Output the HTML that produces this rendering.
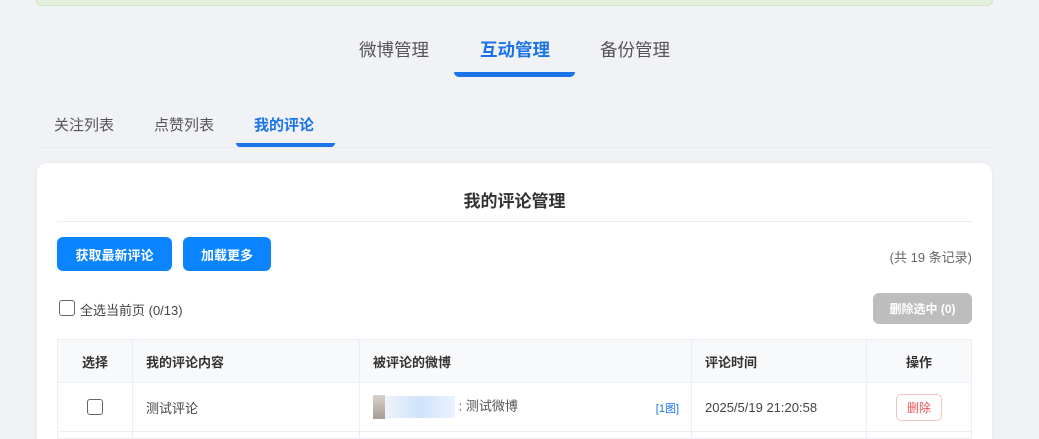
<!DOCTYPE html>
<html><head><meta charset="utf-8"><style>
*{box-sizing:border-box;margin:0;padding:0}
html{width:1039px;height:439px;overflow:hidden}
body{width:1039px;height:439px;overflow:hidden;background:#f0f2f5;font-family:"Liberation Sans","Noto Sans CJK SC",sans-serif;color:#333;position:relative}
.abs{position:absolute}
.green{left:36px;top:-10px;width:957px;height:16px;background:#e3f1dc;border:1px solid #cfe6c3;border-radius:6px}
.mt{font-size:17.5px;color:#555;top:37px}
.st{font-size:15px;color:#555;top:114px}
.card{left:37px;top:163px;width:955px;height:276px;background:#fff;border-radius:10px 10px 0 0;box-shadow:0 1px 6px rgba(0,0,0,.06)}
.btn{background:#0a84ff;color:#fff;font-size:13px;font-weight:bold;border-radius:6px;display:flex;align-items:center;justify-content:center}
table{position:absolute;left:57px;top:339px;width:915px;border-collapse:collapse;font-size:13px}
td,th{border:1px solid #ebeef2;text-align:left;padding-left:13px}
th{height:43px;background:#f8f9fb;font-weight:bold;color:#333}
td{height:49px;color:#444}
.cb{display:inline-block;width:16px;height:16px;border:1.5px solid #666;border-radius:3px;background:#fff}
</style></head><body>
<div class="abs green"></div>
<div class="abs mt" style="left:359px">微博管理</div>
<div class="abs mt" style="left:480px;color:#1a73e8;font-weight:bold">互动管理</div>
<div class="abs" style="left:454px;top:72px;width:121px;height:5px;background:#1a73e8;border-radius:0 0 6px 6px"></div>
<div class="abs mt" style="left:600px">备份管理</div>
<div class="abs st" style="left:54px">关注列表</div>
<div class="abs st" style="left:154px">点赞列表</div>
<div class="abs st" style="left:254px;color:#1a73e8;font-weight:bold">我的评论</div>
<div class="abs" style="left:236px;top:143px;width:99px;height:4px;background:#1a73e8;border-radius:0 0 6px 6px"></div>
<div class="abs" style="left:36px;top:147px;width:957px;height:1px;background:#e8eaee"></div>
<div class="abs card"></div>
<div class="abs" style="left:37px;width:955px;top:187px;text-align:center;font-size:17px;font-weight:bold;color:#333">我的评论管理</div>
<div class="abs" style="left:57px;top:221px;width:915px;height:1px;background:#eceef1"></div>
<div class="abs btn" style="left:57px;top:237px;width:115px;height:34px">获取最新评论</div>
<div class="abs btn" style="left:183px;top:237px;width:88px;height:34px">加载更多</div>
<div class="abs" style="right:67px;top:247px;font-size:13px;color:#666">(共 19 条记录)</div>
<div class="abs cb" style="left:59px;top:300px"></div>
<div class="abs" style="left:80px;top:300px;font-size:13px;color:#444">全选当前页 (0/13)</div>
<div class="abs btn" style="left:873px;top:293px;width:99px;height:31px;background:#bdbdbd;font-size:12px">删除选中 (0)</div>
<table>
<tr><th style="width:75px;text-align:center;padding:0">选择</th><th style="width:227px">我的评论内容</th><th style="width:332px">被评论的微博</th><th style="width:175px">评论时间</th><th style="text-align:center;padding:0">操作</th></tr>
<tr><td style="text-align:center;padding:0"><span class="cb" style="vertical-align:middle"></span></td><td>测试评论</td>
<td style="position:relative"><span style="display:inline-block;vertical-align:middle;width:12px;height:24px;background:linear-gradient(#d8d2cc,#a89c94)"></span><span style="display:inline-block;vertical-align:middle;width:70px;height:22px;background:linear-gradient(90deg,#eef3fa,#cfe3fb,#eaf3ff)"></span><span style="color:#555"> : 测试微博</span><span style="position:absolute;right:12px;top:17px;font-size:11px;color:#1a73e8">[1图]</span></td>
<td>2025/5/19 21:20:58</td>
<td style="text-align:center;padding:0"><span style="display:inline-block;border:1px solid #f3c4c4;border-radius:5px;color:#e55;padding:4px 10px;font-size:12px">删除</span></td></tr>
<tr><td style="height:7px"></td><td style="height:7px"></td><td style="height:7px"></td><td style="height:7px"></td><td style="height:7px"></td></tr>
</table>
</body></html>
